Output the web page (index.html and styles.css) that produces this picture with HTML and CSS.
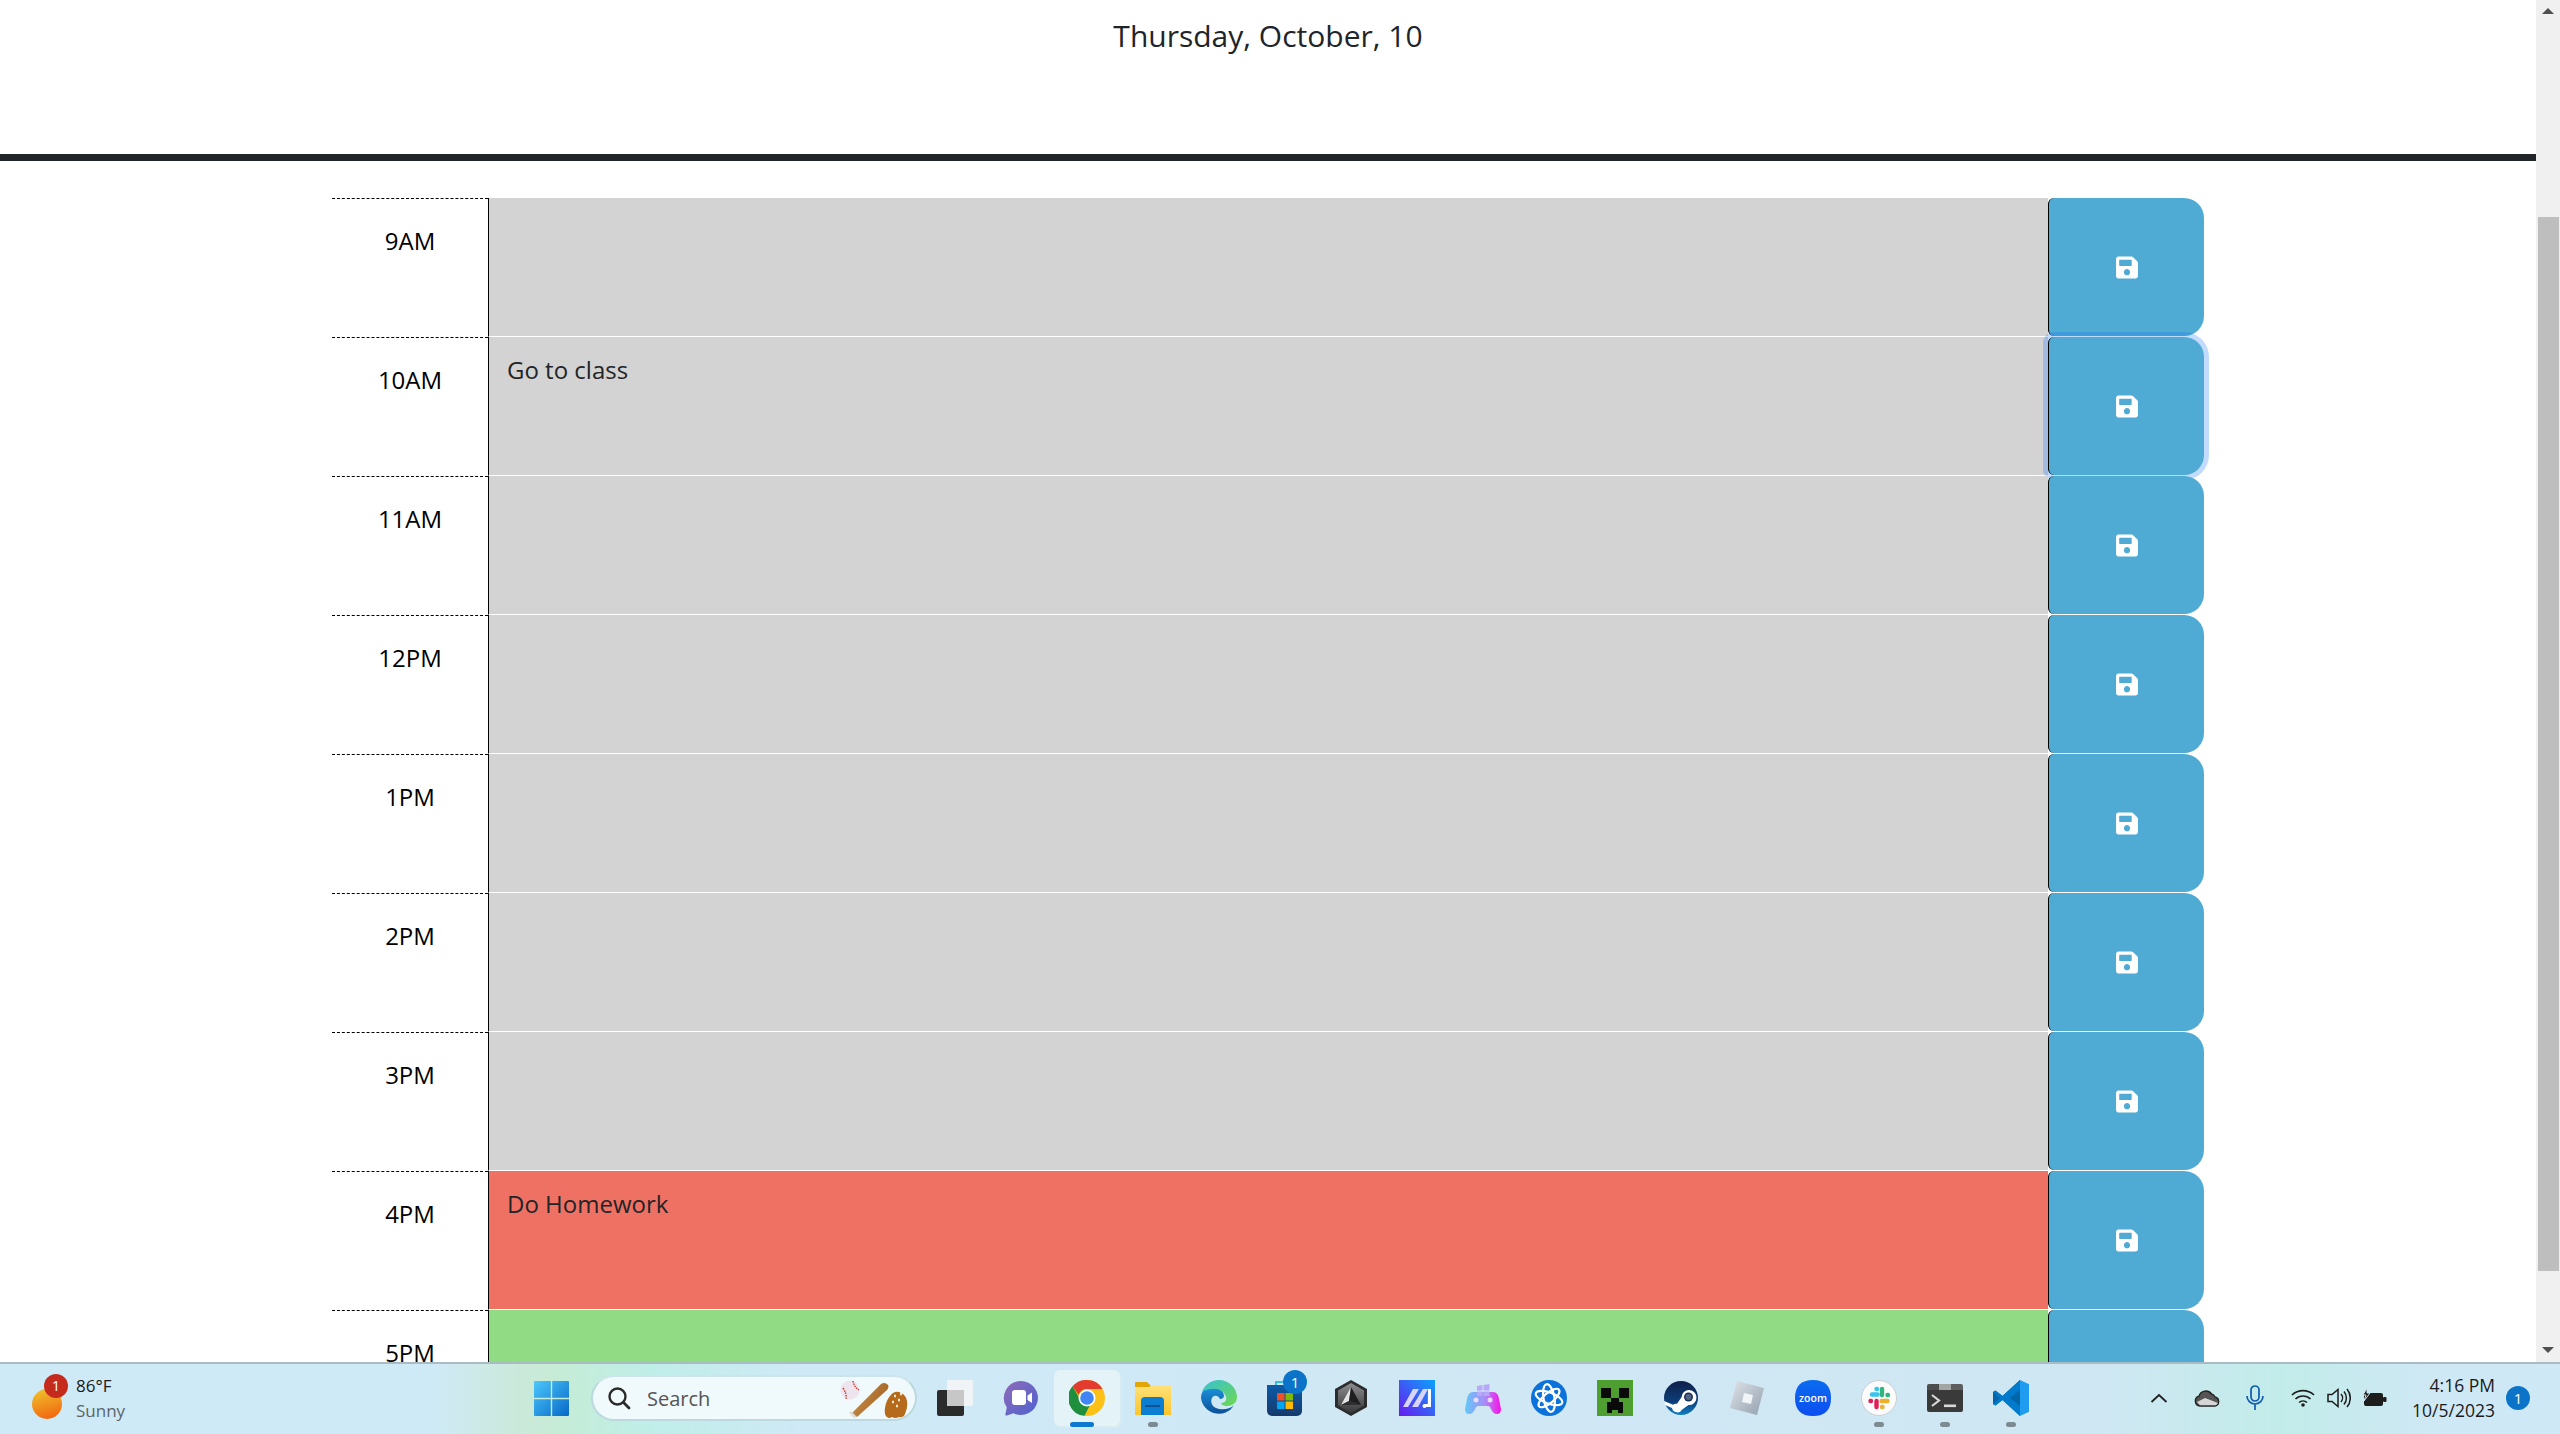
FILE: index.html
```html
<!DOCTYPE html>
<html lang="en">
<head>
<meta charset="utf-8">
<title>Work Day Scheduler</title>
<link rel="stylesheet" href="styles.css">
</head>
<body>
<svg class="defs" aria-hidden="true">
  <defs>
    <symbol id="save" viewBox="0 0 448 512"><path fill="currentColor" fill-rule="evenodd" d="M433.941 129.941l-83.882-83.882A48 48 0 0 0 316.118 32H48C21.49 32 0 53.49 0 80v352c0 26.51 21.49 48 48 48h352c26.51 0 48-21.49 48-48V163.882a48 48 0 0 0-14.059-33.941zM224 416c-35.346 0-64-28.654-64-64 0-35.346 28.654-64 64-64s64 28.654 64 64c0 35.346-28.654 64-64 64zm96-304.52V212c0 6.627-5.373 12-12 12H76c-6.627 0-12-5.373-12-12V108c0-6.627 5.373-12 12-12h228.52c3.183 0 6.235 1.264 8.485 3.515l3.48 3.48A11.996 11.996 0 0 1 320 111.48z"/></symbol>
    <linearGradient id="gSun" x1="0.3" y1="0" x2="0.6" y2="1"><stop offset="0" stop-color="#efc02c"/><stop offset="1" stop-color="#f3660f"/></linearGradient>
    <linearGradient id="gWin" x1="0" y1="0" x2="1" y2="1"><stop offset="0" stop-color="#4cc8fb"/><stop offset="1" stop-color="#0668c8"/></linearGradient>
    <linearGradient id="gChat" x1="0" y1="0" x2="1" y2="1"><stop offset="0" stop-color="#8f6bb8"/><stop offset="1" stop-color="#4d62d0"/></linearGradient>
    <linearGradient id="gEdge" x1="0" y1="0" x2="1" y2="1"><stop offset="0" stop-color="#35c1d6"/><stop offset="1" stop-color="#6fd84f"/></linearGradient>
    <linearGradient id="gEdge2" x1="0" y1="0" x2="0" y2="1"><stop offset="0" stop-color="#1b93dc"/><stop offset="1" stop-color="#0c4f9a"/></linearGradient>
    <linearGradient id="gStore" x1="0" y1="0" x2="0" y2="1"><stop offset="0" stop-color="#0c5aa8"/><stop offset="1" stop-color="#163a6c"/></linearGradient>
    <linearGradient id="gHex" x1="0" y1="0" x2="0" y2="1"><stop offset="0" stop-color="#8d8d8f"/><stop offset="1" stop-color="#38383a"/></linearGradient>
    <linearGradient id="gMa" x1="1" y1="0" x2="0" y2="1"><stop offset="0" stop-color="#0aa3fb"/><stop offset="1" stop-color="#6a18f0"/></linearGradient>
    <linearGradient id="gPad" x1="0" y1="0" x2="1" y2="0"><stop offset="0" stop-color="#62c8f8"/><stop offset="0.55" stop-color="#a98cf6"/><stop offset="1" stop-color="#fa10e8"/></linearGradient>
    <linearGradient id="gSteam" x1="0" y1="0" x2="0" y2="1"><stop offset="0" stop-color="#10204a"/><stop offset="0.6" stop-color="#0d3d78"/><stop offset="1" stop-color="#0f7fc4"/></linearGradient>
    <linearGradient id="gRob" x1="0" y1="0" x2="1" y2="1"><stop offset="0" stop-color="#dfe3e8"/><stop offset="1" stop-color="#93a0ae"/></linearGradient>
    <linearGradient id="gZoom" x1="0" y1="0" x2="0" y2="1"><stop offset="0" stop-color="#0b6cf0"/><stop offset="1" stop-color="#0d4ef0"/></linearGradient>
    <linearGradient id="gBat" x1="0" y1="0" x2="1" y2="0.3"><stop offset="0" stop-color="#c98d43"/><stop offset="1" stop-color="#a8692a"/></linearGradient>
    <linearGradient id="gFolder" x1="0" y1="0" x2="0" y2="1"><stop offset="0" stop-color="#ffe27a"/><stop offset="1" stop-color="#fbc42b"/></linearGradient>
  </defs>
</svg>
<div class="screen">
  <div class="browser">
    <main class="page">
      <header class="jumbotron">
        <p class="lead">Thursday, October, 10</p>
      </header>
      <section class="schedule">
        <div class="row">
          <div class="hour">9AM</div>
          <div class="task past"></div>
          <button class="saveBtn"><svg class="save-icon"><use href="#save"/></svg></button>
        </div>
        <div class="row">
          <div class="hour">10AM</div>
          <div class="task past">Go to class</div>
          <button class="saveBtn focused"><svg class="save-icon"><use href="#save"/></svg></button>
        </div>
        <div class="row">
          <div class="hour">11AM</div>
          <div class="task past"></div>
          <button class="saveBtn"><svg class="save-icon"><use href="#save"/></svg></button>
        </div>
        <div class="row">
          <div class="hour">12PM</div>
          <div class="task past"></div>
          <button class="saveBtn"><svg class="save-icon"><use href="#save"/></svg></button>
        </div>
        <div class="row">
          <div class="hour">1PM</div>
          <div class="task past"></div>
          <button class="saveBtn"><svg class="save-icon"><use href="#save"/></svg></button>
        </div>
        <div class="row">
          <div class="hour">2PM</div>
          <div class="task past"></div>
          <button class="saveBtn"><svg class="save-icon"><use href="#save"/></svg></button>
        </div>
        <div class="row">
          <div class="hour">3PM</div>
          <div class="task past"></div>
          <button class="saveBtn"><svg class="save-icon"><use href="#save"/></svg></button>
        </div>
        <div class="row">
          <div class="hour">4PM</div>
          <div class="task present">Do Homework</div>
          <button class="saveBtn"><svg class="save-icon"><use href="#save"/></svg></button>
        </div>
        <div class="row">
          <div class="hour">5PM</div>
          <div class="task future"></div>
          <button class="saveBtn"><svg class="save-icon"><use href="#save"/></svg></button>
        </div>
      </section>
    </main>
    <div class="scrollbar">
      <div class="arrow arrow-up"></div>
      <div class="thumb"></div>
      <div class="arrow arrow-down"></div>
    </div>
  </div>

  <footer class="taskbar">
    <div class="weather">
      <div class="sun">
        <svg width="32" height="32" viewBox="0 0 32 32"><ellipse cx="16" cy="16" rx="15" ry="15" fill="url(#gSun)"/></svg>
        <span class="sun-badge">1</span>
      </div>
      <div class="weather-text">
        <span class="temp">86°F</span>
        <span class="cond">Sunny</span>
      </div>
    </div>

    <div class="slot">
      <svg width="35" height="35" viewBox="0 0 35 35"><path fill="url(#gWin)" d="M1 0h15.8v16.8H0V1a1 1 0 0 1 1-1zM18.200 0H34a1 1 0 0 1 1 1v15.800H18.200zM0 18.200h16.800V35H1a1 1 0 0 1-1-1zM18.200 18.200H35V34a1 1 0 0 1-1 1H18.200z"/></svg>
    </div>

    <div class="search">
      <svg class="search-icon" width="24" height="24" viewBox="0 0 24 24"><circle cx="10.500" cy="10.500" r="8" fill="none" stroke="#2a2a2a" stroke-width="2.400"/><path d="M16.500 16.500L22 22" stroke="#2a2a2a" stroke-width="2.800" stroke-linecap="round"/></svg>
      <span class="search-label">Search</span>
      <svg class="search-art" width="72" height="38" viewBox="0 0 72 38">
        <circle cx="10" cy="10" r="9.500" fill="#eee4ee"/>
        <path d="M3 8q4 6 3 11M13 1q1 6 6 9" fill="none" stroke="#c83a2a" stroke-width="1.400" stroke-dasharray="1.500 1"/>
        <path d="M11 34l30-30q3-2 6 0t0 6L17 37z" fill="url(#gBat)"/>
        <path d="M11 31l6 6-3 1-5-5z" fill="#dcdcdc"/>
        <path d="M47 37q-3-2-2-9t5-12q2-3 5-4t6 1q5 2 6 8t-2 13q-2 4-6 3-4 2-7 0-3 2-5 0z" fill="#b56a1c"/>
        <path d="M54 16h2M60 14h2M52 22h2M58 20h2M56 26h2" stroke="#f4e6cc" stroke-width="2.400"/>
      </svg>
    </div>

    <div class="apps">
      <div class="slot">
        <svg width="36" height="36" viewBox="0 0 36 36"><rect x="10" y="0" width="26" height="26" rx="2" fill="#f6f6f6" opacity=".85"/><rect x="0" y="10" width="27" height="26" rx="2" fill="#2b2b2b"/><rect x="10" y="10" width="17" height="16" fill="#c7c7c7"/></svg>
      </div>
      <div class="slot">
        <svg width="36" height="36" viewBox="0 0 36 36"><path fill="url(#gChat)" d="M18 1a17 17 0 1 1-7.500 32.300L4 35.500q-2 .5-1.600-1.500l1.400-6.500A17 17 0 0 1 18 1z"/><rect x="9" y="10" width="14" height="15" rx="3" fill="#fff"/><path d="M24.500 15.500l4.500-3v10.500l-4.500-3z" fill="#fff"/></svg>
      </div>
      <div class="slot active">
        <svg width="36" height="36" viewBox="0 0 36 36"><circle cx="18" cy="18" r="18" fill="#fbc116"/><path fill="#e33b2e" d="M18 0a18 18 0 0 1 15.600 9H18a9 9 0 0 0-8.400 5.800L3.500 6.200A18 18 0 0 1 18 0z"/><path fill="#1f8e3d" d="M3.500 6.200l7.800 13.500a8 8 0 0 0 9.300 6L15.500 35.800A18 18 0 0 1 3.500 6.200z"/><circle cx="18" cy="18" r="8.500" fill="#fff"/><circle cx="18" cy="18" r="6.800" fill="#4285f4"/></svg>
      </div>
      <div class="slot running">
        <svg width="36" height="33" viewBox="0 0 36 33"><path fill="#e3a505" d="M1 0h11l4 4h19a1 1 0 0 1 1 1v10H0V1a1 1 0 0 1 1-1z"/><path fill="url(#gFolder)" d="M0 5h14l3-2h18a1 1 0 0 1 1 1v29H0z"/><path fill="#0b7ed1" d="M6 33v-14a4 4 0 0 1 4-4h15a4 4 0 0 1 4 4v14z"/><rect x="10" y="23" width="15" height="2" fill="#0a4f91"/></svg>
      </div>
      <div class="slot">
        <svg width="36" height="36" viewBox="0 0 36 36"><path fill="url(#gEdge2)" d="M33 25.500A18 18 0 0 1 0 18C0 9 7 7 12 7c7 0 11 5 11 9 0 2-2 3-4 3-1-3-4-4-6-3-4 2-4 9 2 12 6 2.500 14 1 18-2.500z"/><path fill="url(#gEdge)" d="M1 12C3 5 10 0 18 0c10 0 18 8 18 17 0 6-5 9-10 9-4 0-6-2-6-3 4 0 6-3 5-6-2-6-8-9-14-8-5 .5-9 2-11 3z"/></svg>
      </div>
      <div class="slot store">
        <svg width="36" height="36" viewBox="0 0 36 36"><path d="M9 5V2h13" fill="none" stroke="#35bdf2" stroke-width="2"/><path fill="url(#gStore)" d="M0 5h35v26a5 5 0 0 1-5 5H5a5 5 0 0 1-5-5z"/><rect x="10" y="13" width="7.500" height="7.500" fill="#f25022"/><rect x="18.500" y="13" width="7.500" height="7.500" fill="#7fba00"/><rect x="10" y="21.500" width="7.500" height="7.500" fill="#00a4ef"/><rect x="18.500" y="21.500" width="7.500" height="7.500" fill="#ffb900"/></svg>
        <span class="store-badge">1</span>
      </div>
      <div class="slot">
        <svg width="34" height="36" viewBox="0 0 34 36"><path fill="#2c2c2e" d="M17 0l16 9v18l-16 9-16-9V9z"/><path fill="url(#gHex)" d="M17 3l13 7.500v15L17 33 4 25.500v-15z"/><path fill="#e4e4e6" d="M17 7L7 25l8-4z"/><path fill="#1e1e20" d="M17 7l10 18-12-4z"/><path fill="#2e2e30" d="M7 25l20 0-12-4z"/></svg>
      </div>
      <div class="slot">
        <svg width="36" height="36" viewBox="0 0 36 36"><rect width="36" height="36" fill="url(#gMa)"/><path fill="#d9d4fb" d="M14 9h6L9 27H4zM24 9h5L19 27h-6z"/><path fill="#fff" d="M29 9h3v18h-6v-3h2.800z"/><circle cx="25.500" cy="26" r="2" fill="#fff"/></svg>
      </div>
      <div class="slot">
        <svg width="36" height="32" viewBox="0 0 36 32"><path fill="url(#gPad)" d="M8 10h20q5 0 6 7l2 10q0 5-4 5t-6-5q-1-3-3-3H13q-2 0-3 3-2 5-6 5t-4-5l2-10q1-7 6-7z"/><path fill="#b6a8f6" d="M12 4l5.500-1v5.500H12zM18.500 3l6-1v6.500h-6zM12 9.500h5.500V14H12zM18.500 9.500h6V14h-6z"/><circle cx="11" cy="18" r="2.500" fill="#e8dcfb"/><circle cx="25" cy="18" r="2.500" fill="#e8dcfb"/></svg>
      </div>
      <div class="slot">
        <svg width="36" height="36" viewBox="0 0 36 36"><circle cx="18" cy="18" r="18" fill="#0a72da"/><g fill="none" stroke="#fff" stroke-width="2.200"><ellipse cx="18" cy="18" rx="14" ry="5.500" transform="rotate(20 18 18)"/><ellipse cx="18" cy="18" rx="14" ry="5.500" transform="rotate(80 18 18)"/><ellipse cx="18" cy="18" rx="13" ry="5" transform="rotate(-40 18 18)"/></g></svg>
      </div>
      <div class="slot">
        <svg width="36" height="36" viewBox="0 0 36 36"><rect width="36" height="36" fill="#4e9e30"/><path fill="#0a0a0a" d="M4 8h10v10H4zM22 8h10v10H22zM14 18h8v4h4v11h-5v-3h-6v3h-5V22h4z"/></svg>
      </div>
      <div class="slot">
        <svg width="34" height="34" viewBox="0 0 34 34"><circle cx="17" cy="17" r="17" fill="url(#gSteam)"/><path fill="#fff" d="M0 20l9 3.800a5.500 5.500 0 0 1 4-1l4.500-6.500a7.500 7.500 0 1 1 7 7.700l-6.300 4.600A5.500 5.500 0 0 1 8 27L1 24z"/><circle cx="24.500" cy="16" r="4.500" fill="#1a2f5a"/><circle cx="24.500" cy="16" r="3" fill="#fff" opacity=".25"/></svg>
      </div>
      <div class="slot">
        <svg width="36" height="36" viewBox="0 0 36 36"><path fill="url(#gRob)" d="M8 1l27 7-7 27-27-7z"/><path fill="#f1f4f7" d="M15 13l9 2-2 9-9-2z"/></svg>
      </div>
      <div class="slot">
        <svg width="36" height="36" viewBox="0 0 36 36"><path fill="url(#gZoom)" d="M18 0c12 0 18 6 18 18s-6 18-18 18S0 30 0 18 6 0 18 0z"/><text x="18" y="21.500" class="zoom-word" text-anchor="middle">zoom</text></svg>
      </div>
      <div class="slot running">
        <svg width="36" height="36" viewBox="0 0 36 36"><circle cx="18" cy="18" r="17.500" fill="#fbfbfb" stroke="#c8ced2"/><g stroke-width="4.400" stroke-linecap="round"><path d="M11 14.500h5.500" stroke="#36c5f0"/><path d="M15.500 9h.500" stroke="#36c5f0"/><path d="M21 9v6" stroke="#2eb67d"/><path d="M26.500 15h.500" stroke="#2eb67d"/><path d="M20.500 21h6" stroke="#ecb22e"/><path d="M21 27h.500" stroke="#ecb22e"/><path d="M15.500 21v6" stroke="#e01e5a"/><path d="M9.500 21h.500" stroke="#e01e5a"/></g></svg>
      </div>
      <div class="slot running">
        <svg width="36" height="28" viewBox="0 0 36 28"><path fill="#3a3a3a" d="M0 6h36v20a2 2 0 0 1-2 2H2a2 2 0 0 1-2-2z"/><path fill="#4d4d4d" d="M2 0h10v6H0V2a2 2 0 0 1 2-2z"/><path fill="#a4a4a4" d="M12 0h12v6H12z"/><path fill="#5e5e5e" d="M24 0h10a2 2 0 0 1 2 2v4H24z"/><path d="M5 11l7 5.500L5 22" fill="none" stroke="#d8d8d8" stroke-width="2.200"/><rect x="17" y="20.500" width="12" height="2.600" fill="#d8d8d8"/></svg>
      </div>
      <div class="slot running">
        <svg width="36" height="36" viewBox="0 0 36 36"><path fill="#0065a9" d="M27 0L9.500 16 2.500 10.500 0 12v12l2.500 1.500 7-5.500L27 36z"/><path fill="#007acc" d="M27 0L9.500 16l-7-5.500L0 12l7 6-7 6 2.500 1.500 7-5.500L27 36l0-10-10-8 10-8z"/><path fill="#1f9cf0" d="M27 0l9 4.300v27.400L27 36z"/></svg>
      </div>
    </div>

    <div class="tray">
      <div class="tray-slot wide">
        <svg width="18" height="10" viewBox="0 0 18 10"><path d="M1.500 9L9 2l7.500 7" fill="none" stroke="#222" stroke-width="1.800"/></svg>
      </div>
      <div class="tray-slot wide">
        <svg width="26" height="18" viewBox="0 0 26 18"><path fill="#555" stroke="#222" stroke-width="1.400" d="M6 17a5 5 0 0 1-1-9.800A7 7 0 0 1 17.500 5 4.800 4.800 0 0 1 21 8a4.600 4.600 0 0 1 0 9z"/><path fill="#d6d6d6" d="M3 13l8-4 13 5-2 2.200H6z"/></svg>
      </div>
      <div class="tray-slot wide">
        <svg width="20" height="26" viewBox="0 0 20 26"><rect x="6" y="1" width="8" height="15" rx="4" fill="none" stroke="#0f5bb0" stroke-width="1.700"/><path d="M2 11a8 8 0 0 0 16 0M10 19v6" fill="none" stroke="#0f5bb0" stroke-width="1.700"/></svg>
      </div>
      <div class="tray-slot first-narrow">
        <svg width="24" height="18" viewBox="0 0 24 18"><g fill="none" stroke="#1d1d1d" stroke-width="1.600"><path d="M1 6a16 16 0 0 1 22 0"/><path d="M4.500 10a11 11 0 0 1 15 0"/><path d="M8 13.500a6 6 0 0 1 8 0"/></g><circle cx="12" cy="16" r="1.800" fill="#1d1d1d"/></svg>
      </div>
      <div class="tray-slot">
        <svg width="24" height="20" viewBox="0 0 24 20"><path d="M1 6.500h4L11 1.500v17l-6-5H1z" fill="none" stroke="#1d1d1d" stroke-width="1.500"/><g fill="none" stroke="#1d1d1d" stroke-width="1.500"><path d="M14 6a6 6 0 0 1 0 8"/><path d="M17 3.500a10 10 0 0 1 0 13"/><path d="M20 1a14 14 0 0 1 0 18"/></g></svg>
      </div>
      <div class="tray-slot">
        <svg width="24" height="20" viewBox="0 0 24 20"><rect x="1" y="5" width="19" height="13" rx="2" fill="#1d1d1d"/><rect x="20" y="9" width="3.500" height="5" rx="1" fill="#1d1d1d"/><path d="M4 0L0 7h3l-2 6 6-8H4z" fill="#1d1d1d" stroke="#cfe9f4"/></svg>
      </div>
      <div class="clock">
        <span>4:16 PM</span>
        <span>10/5/2023</span>
      </div>
      <div class="notify">1</div>
    </div>
  </footer>
</div>
</body>
</html>
```

FILE: styles.css
```css
* { box-sizing: border-box; }
html, body { margin: 0; padding: 0; height: 100%; overflow: hidden; }
body { font-family: "Open Sans", "Noto Sans", sans-serif; color: #212529; background: #fff; }
.defs { position: absolute; width: 0; height: 0; }

.screen { display: flex; flex-direction: column; height: 1434px; width: 2560px; }
.browser { display: flex; height: 1362px; overflow: hidden; flex: none; }

.page { flex: 1; min-width: 0; overflow: hidden; background: #fff; }
.jumbotron { height: 161px; border-bottom: 7px solid #212529; text-align: center; }
.lead { margin: 0; padding-top: 15px; font-size: 30px; line-height: 42px; font-weight: 400; }

.schedule { margin: 37px 0 0 332px; width: 1872px; }
.row { display: flex; height: 139px; }
.hour { width: 156px; flex: none; border-top: 1px dashed #000; text-align: center; font-size: 24px; line-height: 36px; padding-top: 24px; color: #000; }
.task { flex: 1; height: 139px; border-left: 1px solid #000; border-bottom: 1px solid #fff; padding: 15px 18px; font-size: 24px; line-height: 36px; }
.past { background: #d3d3d3; }
.present { background: #ef7163; }
.future { background: #90db84; }

.saveBtn { width: 156px; height: 138px; flex: none; padding: 0; border: 0; border-left: 1px solid #000; border-radius: 6px 20px 20px 6px; background: #4fabd3; color: #fff; display: flex; align-items: center; justify-content: center; }
.focused { box-shadow: 0 0 0 5px rgba(13, 110, 253, .25); }
.save-icon { width: 22px; height: 25px; }

.scrollbar { width: 24px; flex: none; background: #f0f0f0; position: relative; display: flex; flex-direction: column; align-items: center; justify-content: space-between; padding: 8px 0 9px; }
.thumb { position: absolute; left: 2px; right: 1px; top: 217px; height: 1054px; background: #bebebe; }
.arrow { width: 0; height: 0; border-left: 6px solid transparent; border-right: 6px solid transparent; }
.arrow-up { border-bottom: 6px solid #505050; }
.arrow-down { border-top: 6px solid #505050; }

.taskbar { height: 72px; flex: none; display: flex; align-items: center; border-top: 2px solid #a9bcc6; background: linear-gradient(90deg, #cfeaf7 0, #cfeaf7 430px, #cbe9da 520px, #c5ecd6 560px, #bfeee8 650px, #cfe9f6 800px, #cfe7f3 2100px, #c2ece9 2280px, #cfe8f5 2440px, #cfe8f5 100%); padding-bottom: 2px; }

.weather { width: 518px; flex: none; display: flex; align-items: center; height: 100%; padding-left: 31px; }
.sun { position: relative; width: 32px; height: 32px; margin-top: 12px; flex: none; }
.sun svg { display: block; }
.sun-badge { position: absolute; left: 13px; top: -14px; width: 24px; height: 24px; border-radius: 50%; background: #c52b1c; color: #fff; font-size: 14px; line-height: 24px; text-align: center; }
.weather-text { display: flex; flex-direction: column; margin-left: 13px; font-size: 17px; line-height: 25px; }
.temp { color: #1a1a1a; }
.cond { color: #5b6468; }

.slot { width: 66px; height: 56px; flex: none; display: flex; align-items: center; justify-content: center; position: relative; }
.search { width: 326px; height: 46px; flex: none; margin: 0 5px 0 7px; border-radius: 23px; background: #f0f9fb; border: 2px solid #bcd9df; border-top-color: #cde5ea; display: flex; align-items: center; padding-left: 14px; position: relative; }
.search-label { margin-left: 16px; font-size: 20px; color: #555; }
.search-art { position: absolute; right: 3px; top: 3px; }

.apps { display: flex; flex: none; }
.active { background: #e4f3f8; border-radius: 6px; box-shadow: 2px 2px 0 #d8ebf1; }
.active::after { content: ""; position: absolute; left: 16px; bottom: -1px; width: 24px; height: 5px; border-radius: 3px; background: #0b79d0; }
.running::after { content: ""; position: absolute; left: 28px; bottom: -1px; width: 10px; height: 5px; border-radius: 3px; background: #7c8a92; }
.store-badge { position: absolute; left: 31px; top: 0; width: 24px; height: 24px; border-radius: 50%; background: #0b74c8; color: #fff; font-size: 15px; line-height: 24px; text-align: center; }
.zoom-word { font-family: "Open Sans", sans-serif; font-size: 10.500px; font-weight: 600; fill: #fff; }

.tray { display: flex; align-items: center; flex: none; margin-left: 91px; }
.tray-slot { width: 36px; height: 40px; display: flex; align-items: center; justify-content: center; flex: none; }
.wide { width: 48px; }
.first-narrow { margin-left: 6px; }
.clock { width: 102px; display: flex; flex-direction: column; align-items: flex-end; font-size: 17.500px; line-height: 25px; color: #1a1a1a; flex: none; }
.notify { width: 24px; height: 24px; margin-left: 11px; border-radius: 50%; background: #0b74c8; color: #fff; font-size: 15px; line-height: 24px; text-align: center; flex: none; }
```
